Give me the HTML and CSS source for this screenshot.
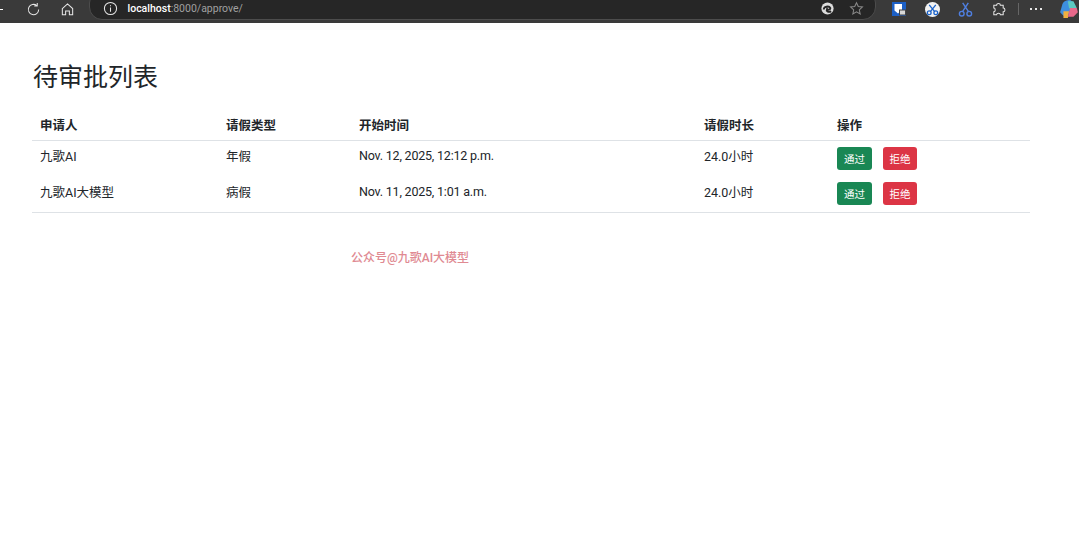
FILE: index.html
```html
<!DOCTYPE html>
<html lang="zh-CN">
<head>
    <meta charset="UTF-8">
    <title>待审批列表</title>
    <link rel="stylesheet" href="styles.css">
</head>
<body>
    <div class="toolbar">
        <span class="dash"></span>
        <svg class="tool reload" viewBox="0 0 16 16"><path d="M13.5 8a5.5 5.5 0 1 1-2-4.2M12 1v3.200H8.800"/></svg>
        <svg class="tool home" viewBox="0 0 16 16"><path d="M2.500 7 8 2l5.500 5v6.500h-3.500v-4H6v4H2.500z"/></svg>
        <div class="address">
            <svg class="tool info" viewBox="0 0 16 16"><circle cx="8" cy="8" r="6.500"/><path d="M8 7v4.500M8 4.500v1"/></svg>
            <span class="url"><b>localhost</b>:8000/approve/</span>
            <svg class="tool edge" viewBox="0 0 16 16"><circle cx="8" cy="8" r="6.500" class="edge-disc"/><path d="M4 9c0-3 5.500-4.500 7-1.500 .5 2-3 2-3.500 1-1 2 1 4 4.500 2.500" class="edge-cut"/></svg>
            <svg class="tool star" viewBox="0 0 16 16"><path d="m8 1.800 1.900 4.100 4.400.5-3.300 3 .9 4.400L8 11.600l-3.900 2.200.9-4.400-3.300-3 4.400-.5z"/></svg>
        </div>
        <svg class="ext shield" viewBox="0 0 14 14"><rect width="14" height="14" fill="#1c5fc4"/><path d="M2.500 2h7.500v6l-4 3.500-3.500-3z" fill="#fff"/><rect x="7.500" y="8" width="6" height="5" fill="#d8d8d8" stroke="#444"/></svg>
        <svg class="ext cut-round" viewBox="0 0 16 16"><circle cx="8" cy="8" r="8" fill="#f2f2f2"/><path d="m4.500 3 6 7.500M11.500 3l-6 7.500" stroke="#1a62c9" stroke-width="1.400" fill="none"/><circle cx="4.500" cy="11.500" r="2" fill="none" stroke="#1a62c9" stroke-width="1.400"/><circle cx="11.500" cy="11.500" r="2" fill="none" stroke="#1a62c9" stroke-width="1.400"/></svg>
        <svg class="ext cut" viewBox="0 0 16 16"><path d="m5 1 6 9M11 1l-6 9" stroke="#4f7fe0" stroke-width="1.500" fill="none"/><circle cx="4" cy="12.500" r="2.500" fill="none" stroke="#4f7fe0" stroke-width="1.500"/><circle cx="12" cy="12.500" r="2.500" fill="none" stroke="#4f7fe0" stroke-width="1.500"/></svg>
        <svg class="tool puzzle" viewBox="0 0 16 16"><path d="M6 3.500c0-2.500 4-2.500 4 0h3v3c2.500 0 2.500 4 0 4v3h-3c0-2-4-2-4 0H3v-3c2 0 2-4 0-4v-3z"/></svg>
        <span class="divider"></span>
        <span class="dots"><i></i><i></i><i></i></span>
        <svg class="ext copilot" viewBox="0 0 18 18"><path d="M3 5c1-3 4-4 7-4l3 2-5 12H4L1 12z" fill="#3d8fe0"/><path d="M8 2h5l3 6-3 3-4-3z" fill="#5cc8c0"/><path d="M4 11h5l-1 6H4z" fill="#f0b040"/><path d="M10 8h6l1 4-4 4H8z" fill="#e8688a"/></svg>
    </div>

    <div class="page">
        <h2 class="title">待审批列表</h2>
        <table class="approve-table">
            <thead>
                <tr>
                    <th class="col-name">申请人</th>
                    <th class="col-type">请假类型</th>
                    <th class="col-start">开始时间</th>
                    <th class="col-hours">请假时长</th>
                    <th>操作</th>
                </tr>
            </thead>
            <tbody>
                <tr>
                    <td>九歌AI</td>
                    <td>年假</td>
                    <td class="date">Nov. 12, 2025, 12:12 p.m.</td>
                    <td>24.0小时</td>
                    <td><button class="btn btn-pass">通过</button><button class="btn btn-reject">拒绝</button></td>
                </tr>
                <tr>
                    <td>九歌AI大模型</td>
                    <td>病假</td>
                    <td class="date">Nov. 11, 2025, 1:01 a.m.</td>
                    <td>24.0小时</td>
                    <td><button class="btn btn-pass">通过</button><button class="btn btn-reject">拒绝</button></td>
                </tr>
            </tbody>
        </table>
    </div>
    <div class="watermark">公众号@九歌AI大模型</div>
</body>
</html>
```

FILE: styles.css
```css
body {
    font-family: Roboto, "Noto Sans CJK SC", sans-serif;
    background-color: #ffffff;
    color: #212529;
    margin: 0;
    padding: 0;
    position: relative;
    height: 556px;
    overflow: hidden;
}
.toolbar {
    display: flex;
    align-items: center;
    box-sizing: border-box;
    height: 23px;
    padding-bottom: 5px;
    background-color: #3a3a3a;
    overflow: hidden;
}
.dash {
    width: 5px;
    height: 1px;
    background-color: #ffffff;
    margin-right: 23px;
}
.tool {
    width: 15px;
    height: 15px;
    fill: none;
    stroke: #e6e6e6;
    stroke-width: 1.1;
    flex-shrink: 0;
}
.reload {
    margin-right: 19px;
}
.home {
    margin-right: 14px;
}
.address {
    display: flex;
    align-items: center;
    align-self: flex-start;
    width: 787px;
    height: 30px;
    margin-top: -10px;
    margin-right: 16px;
    padding: 10px 11px 3px 13px;
    box-sizing: border-box;
    background-color: #262626;
    border: 1px solid #4c4c4c;
    border-radius: 13px;
    flex-shrink: 0;
}
.info {
    margin-right: 10px;
}
.url {
    font-size: 10.500px;
    color: #a0a0a0;
    flex-grow: 1;
}
.url b {
    color: #ffffff;
    font-weight: 500;
}
.edge {
    margin-right: 14px;
}
.edge-disc {
    fill: #dcdcdc;
    stroke: none;
}
.edge-cut {
    stroke: #262626;
    stroke-width: 2;
}
.star {
    stroke: #8a8a8a;
}
.ext {
    flex-shrink: 0;
}
.shield {
    width: 14px;
    height: 14px;
    margin-right: 19px;
}
.cut-round {
    width: 15px;
    height: 15px;
    margin-right: 18px;
}
.cut {
    width: 15px;
    height: 15px;
    margin-right: 18px;
}
.puzzle {
    margin-right: 12px;
}
.divider {
    width: 1px;
    height: 12px;
    background-color: #666666;
    margin-right: 12px;
}
.dots {
    display: flex;
    gap: 3px;
    margin-right: 17px;
}
.dots i {
    width: 2px;
    height: 2px;
    background-color: #e6e6e6;
}
.copilot {
    width: 20px;
    height: 20px;
    flex-shrink: 0;
}
.page {
    padding: 40px 49px 0 32px;
}
.title {
    font-size: 25px;
    font-weight: 400;
    line-height: 30px;
    margin: 0 0 19px 1px;
}
.approve-table {
    width: 998px;
    border-collapse: collapse;
    table-layout: fixed;
    font-size: 12.500px;
    text-align: left;
    border-bottom: 1px solid #dee2e6;
}
.approve-table th {
    font-weight: 700;
    height: 28px;
    padding: 0 8px 2px;
    box-sizing: border-box;
    border-bottom: 1px solid #dee2e6;
}
.approve-table td {
    height: 36px;
    padding: 0 8px 5px;
    box-sizing: border-box;
}
.approve-table .date {
    letter-spacing: -0.2px;
}
.col-name {
    width: 186px;
}
.col-type {
    width: 133px;
}
.col-start {
    width: 345px;
}
.col-hours {
    width: 133px;
}
.btn {
    font-family: inherit;
    font-size: 10.500px;
    color: #ffffff;
    height: 23px;
    padding: 0;
    border: 0;
    border-radius: 3px;
    vertical-align: middle;
    margin-top: 5px;
}
.btn-pass {
    width: 35px;
    background-color: #198754;
    margin-right: 11px;
}
.btn-reject {
    width: 34px;
    background-color: #dc3545;
}
.watermark {
    position: absolute;
    left: 351px;
    top: 248px;
    font-size: 12px;
    font-weight: 500;
    color: #e08a92;
}
```
